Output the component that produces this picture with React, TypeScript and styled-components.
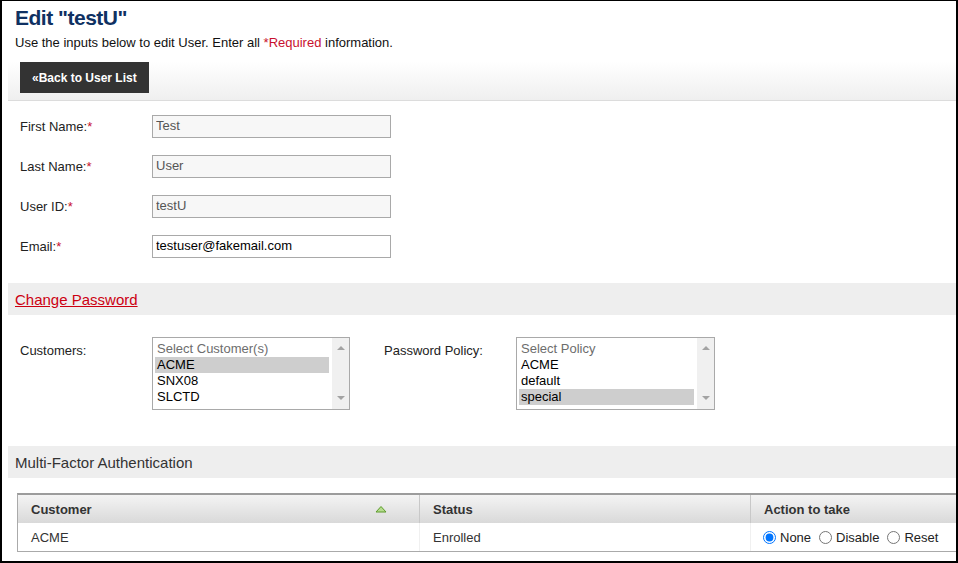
import React from "react";
import styled, { createGlobalStyle } from "styled-components";

const Global = createGlobalStyle`
  html, body { margin: 0; padding: 0; background: #fff; }
  body { font-family: "Liberation Sans", Arial, sans-serif; }
  * { box-sizing: border-box; }
`;

const Frame = styled.div`
  width: 958px;
  height: 563px;
  overflow: hidden;
  border-style: solid;
  border-color: #000;
  border-width: 1px 2px 2px 2px;
  background: #fff;
  padding-left: 6px;
`;

const Title = styled.h1`
  margin: 0;
  padding: 5px 0 0 7px;
  font-size: 21px;
  letter-spacing: -0.5px;
  line-height: 24px;
  font-weight: bold;
  color: #0f3162;
`;

const Subtitle = styled.p`
  margin: 5px 0 0;
  padding-left: 7px;
  font-size: 13px;
  line-height: 15px;
  color: #111;
`;

const Req = styled.span`
  color: #c8102e;
`;

const Toolbar = styled.div`
  margin-top: 5px;
  height: 46px;
  padding: 7px 0 0 12px;
  background: linear-gradient(to bottom, #ffffff 15%, #efefef 100%);
  border-bottom: 1px solid #dcdcdc;
`;

const DarkButton = styled.button`
  height: 31px;
  padding: 0 12px;
  border: none;
  background: #333;
  color: #fff;
  font-family: "Liberation Sans", Arial, sans-serif;
  font-weight: bold;
  font-size: 12px;
  cursor: pointer;
`;

const Form = styled.div`
  padding: 5px 0 17px 12px;
`;

const FieldRow = styled.div`
  display: grid;
  grid-template-columns: 132px 239px;
  align-items: center;
  height: 40px;
`;

const Label = styled.label`
  font-size: 13px;
  color: #222;
  padding-top: 1px;
`;

const TextInput = styled.input<{ $locked?: boolean }>`
  height: 23px;
  width: 239px;
  border: 1px solid #a9a9a9;
  padding: 0 3px 2px;
  font-family: "Liberation Sans", Arial, sans-serif;
  font-size: 13px;
  background: ${(p) => (p.$locked ? "#f7f7f7" : "#fff")};
  color: ${(p) => (p.$locked ? "#555" : "#000")};
  outline: none;
`;

const Band = styled.div`
  height: 32px;
  background: #eeeeee;
  padding-left: 7px;
  display: flex;
  align-items: center;
  font-size: 15px;
  color: #333;
`;

const RedLink = styled.a`
  color: #cc0011;
  text-decoration: underline;
  font-size: 15px;
  cursor: pointer;
`;

const SelectSection = styled.div`
  padding: 22px 0 36px 12px;
  display: grid;
  grid-template-columns: 132px 198px 34px 132px 199px;
  align-items: start;
`;

const SelectLabel = styled.div`
  font-size: 13px;
  color: #222;
  padding-top: 6px;
`;

const ListBox = styled.div`
  height: 73px;
  border: 1px solid #a9a9a9;
  display: flex;
  background: #fff;
`;

const Options = styled.div`
  flex: 1;
  padding: 3px 3px 0 2px;
`;

const Option = styled.div<{ $selected?: boolean; $placeholder?: boolean }>`
  height: 16px;
  line-height: 16px;
  font-size: 13px;
  padding-left: 2px;
  color: ${(p) => (p.$placeholder ? "#6d6d6d" : "#000")};
  background: ${(p) => (p.$selected ? "#cecece" : "transparent")};
`;

const ScrollTrack = styled.div`
  width: 17px;
  background: #f0f0f0;
  display: flex;
  flex-direction: column;
  justify-content: space-between;
  align-items: center;
  padding: 8px 0 9px;
`;

const Arrow = styled.span<{ $down?: boolean }>`
  width: 0;
  height: 0;
  border-left: 4px solid transparent;
  border-right: 4px solid transparent;
  ${(p) => (p.$down ? "border-top: 4px solid #a3a3a3;" : "border-bottom: 4px solid #a3a3a3;")}
`;

const Grid = styled.div`
  margin: 15px 0 0 9px;
  display: grid;
  grid-template-columns: 401px 331px 1fr;
  border-left: 1px solid #aaa;
  border-top: 2px solid #9c9c9c;
  border-bottom: 1px solid #aaa;
`;

const HeadCell = styled.div<{ $first?: boolean }>`
  height: 28px;
  display: flex;
  align-items: center;
  justify-content: space-between;
  padding: 0 32px 0 13px;
  background: linear-gradient(to bottom, #f4f4f4, #d9d9d9);
  font-weight: bold;
  font-size: 13px;
  color: #333;
  border-left: ${(p) => (p.$first ? "none" : "1px solid #c8c8c8")};
`;

const BodyCell = styled.div<{ $first?: boolean; $tight?: boolean }>`
  height: 28px;
  display: flex;
  align-items: center;
  padding-left: ${(p) => (p.$tight ? "12px" : "13px")};
  font-size: 13px;
  color: #333;
  border-left: ${(p) => (p.$first ? "none" : "1px solid #f0f0f0")};
`;

const RadioOption = styled.label`
  display: flex;
  align-items: center;
  margin-right: 8px;
  font-size: 13px;
  color: #222;
`;

const Radio = styled.input`
  width: 13px;
  height: 13px;
  margin: 0 4px 0 0;
`;

const SortIcon = () => (
  <svg width="12" height="8" viewBox="0 0 12 8">
    <path d="M1 7 L6 1.5 L11 7 Z" fill="#b5dc8e" stroke="#5c9b2a" strokeWidth="1" />
  </svg>
);

const ListSelect = ({
  placeholder,
  items,
  selected,
}: {
  placeholder: string;
  items: string[];
  selected: string;
}) => (
  <ListBox>
    <Options>
      <Option $placeholder>{placeholder}</Option>
      {items.map((it) => (
        <Option key={it} $selected={it === selected}>
          {it}
        </Option>
      ))}
    </Options>
    <ScrollTrack>
      <Arrow />
      <Arrow $down />
    </ScrollTrack>
  </ListBox>
);

const fields = [
  { label: "First Name:", value: "Test", locked: true },
  { label: "Last Name:", value: "User", locked: true },
  { label: "User ID:", value: "testU", locked: true },
  { label: "Email:", value: "testuser@fakemail.com", locked: false },
];

export default function App() {
  return (
    <>
      <Global />
      <Frame>
        <Title>Edit "testU"</Title>
        <Subtitle>
          Use the inputs below to edit User. Enter all <Req>*Required</Req> information.
        </Subtitle>
        <Toolbar>
          <DarkButton>«Back to User List</DarkButton>
        </Toolbar>
        <Form>
          {fields.map((f) => (
            <FieldRow key={f.label}>
              <Label>
                {f.label}
                <Req>*</Req>
              </Label>
              <TextInput $locked={f.locked} defaultValue={f.value} readOnly={f.locked} />
            </FieldRow>
          ))}
        </Form>
        <Band>
          <RedLink>Change Password</RedLink>
        </Band>
        <SelectSection>
          <SelectLabel>Customers:</SelectLabel>
          <ListSelect placeholder="Select Customer(s)" items={["ACME", "SNX08", "SLCTD"]} selected="ACME" />
          <div />
          <SelectLabel>Password Policy:</SelectLabel>
          <ListSelect placeholder="Select Policy" items={["ACME", "default", "special"]} selected="special" />
        </SelectSection>
        <Band>Multi-Factor Authentication</Band>
        <Grid>
          <HeadCell $first>
            Customer
            <SortIcon />
          </HeadCell>
          <HeadCell>Status</HeadCell>
          <HeadCell>Action to take</HeadCell>
          <BodyCell $first>ACME</BodyCell>
          <BodyCell>Enrolled</BodyCell>
          <BodyCell $tight>
            <RadioOption>
              <Radio type="radio" name="mfa" defaultChecked />
              None
            </RadioOption>
            <RadioOption>
              <Radio type="radio" name="mfa" />
              Disable
            </RadioOption>
            <RadioOption>
              <Radio type="radio" name="mfa" />
              Reset
            </RadioOption>
          </BodyCell>
        </Grid>
      </Frame>
    </>
  );
}
